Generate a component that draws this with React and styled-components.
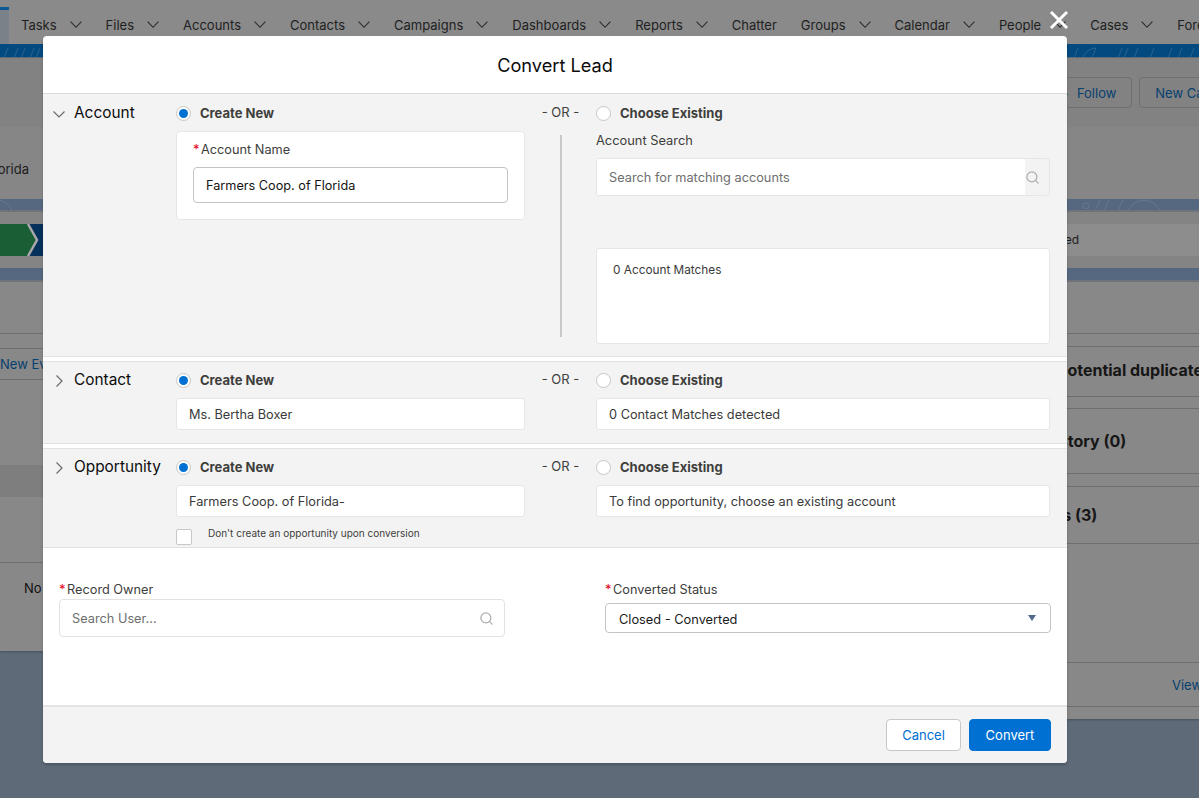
import React from "react";
import styled, { createGlobalStyle } from "styled-components";
import { Search } from "lucide-react";

const font = `Inter, "Liberation Sans", Arial, sans-serif`;

const Global = createGlobalStyle`
  html, body { margin: 0; padding: 0; background: #5e6a78; }
  * { box-sizing: border-box; }
  body { font-family: ${font}; font-size: 13px; }
`;

const Page = styled.div`
  position: relative;
  width: 1199px;
  height: 798px;
  overflow: hidden;
  background: #5e6a78;
  color: #1c1c1c;
`;

/* ---------- dimmed page behind the modal ---------- */
const Nav = styled.nav`
  display: flex;
  height: 44px;
  background: #8a8a8a;
`;
const AppTab = styled.div`
  width: 9px;
  height: 37px;
  margin-top: 7px;
  margin-right: 12px;
  background: #7b8189;
  border-top: 3px solid #0b5a94;
  flex: none;
`;
const NavList = styled.div`
  display: flex;
  align-items: center;
  gap: 24px;
  height: 50px;
  white-space: nowrap;
`;
const NavItem = styled.span`
  display: inline-flex;
  align-items: center;
  gap: 13px;
  font-size: 13px;
  color: #1f1f1f;
`;
const Band = styled.div`
  height: 14px;
  background: #034a80;
  border-bottom: 1px solid #5d6c7a;
  overflow: hidden;
  display: flex;
`;
const ActionStrip = styled.div`
  height: 69px;
  background: #828282;
  display: flex;
  align-items: center;
  justify-content: flex-end;
  gap: 7px;
  margin-right: -35px;
`;
const GhostButton = styled.span`
  height: 31px;
  padding: 0 15px;
  display: inline-flex;
  align-items: center;
  gap: 8px;
  border: 1px solid #6f6f6f;
  border-radius: 4px;
  color: #07406f;
  font-size: 13px;
  white-space: nowrap;
`;
const Identity = styled.div`
  height: 72px;
  background: #868686;
  display: flex;
  align-items: center;
  padding-top: 12px;
`;
const ClippedName = styled.div`
  width: 29px;
  display: flex;
  justify-content: flex-end;
  white-space: nowrap;
  font-size: 13px;
  color: #1c1c1c;
`;
const Banner = styled.div`
  height: ${(p) => p.$h}px;
  background: #56687f;
  border-bottom: 2px solid #6f747a;
  overflow: hidden;
  display: flex;
`;
const PathWrap = styled.div`
  height: 44px;
  background: #848484;
  padding-top: 12px;
`;
const PathBar = styled.div`
  display: flex;
  height: 32px;
  background: #8d8d8d;
  align-items: center;
  justify-content: flex-end;
  padding: 0 120px 2px 0;
  font-size: 12px;
  color: #1c1c1c;
`;
const PathArt = styled.svg`
  position: absolute;
  left: 0;
  top: 224px;
`;
const Spacer = styled.div`
  height: 12px;
  background: #848484;
`;
const Main = styled.div`
  display: grid;
  grid-template-columns: 700px 499px;
  align-items: start;
`;
const Panel = styled.div`
  height: ${(p) => p.$h}px;
  background: #888;
  box-shadow: 0 1px 2px rgba(0, 0, 0, 0.25);
`;
const Rule = styled.div`
  border-top: 1px solid #6e6e6e;
  height: ${(p) => p.$h}px;
  display: flex;
  align-items: ${(p) => (p.$top ? "flex-start" : "center")};
  padding-left: ${(p) => p.$inset || 0}px;
  padding-top: ${(p) => p.$top || 0}px;
  padding-bottom: ${(p) => p.$lift || 0}px;
  white-space: nowrap;
`;
const Gap = styled.div`
  height: ${(p) => p.$h}px;
  background: ${(p) => p.$bg || "transparent"};
`;
const EventLink = styled.span`
  color: #07406f;
  font-size: 13px;
`;
const Empty = styled.span`
  font-size: 13px;
  line-height: 16px;
  color: #111;
`;
const RelTitle = styled.span`
  font-size: 16px;
  font-weight: 700;
  color: #161616;
`;

/* ---------- modal ---------- */
const CloseBtn = styled.svg`
  position: absolute;
  left: 1049px;
  top: 10px;
`;
const Modal = styled.div`
  position: absolute;
  left: 43px;
  top: 36px;
  width: 1024px;
  height: 727px;
  background: #fff;
  border-radius: 4px;
  display: flex;
  flex-direction: column;
  box-shadow: 0 2px 3px rgba(0, 0, 0, 0.2);
  overflow: hidden;
`;
const ModalHeader = styled.h2`
  margin: 0;
  height: 58px;
  flex: none;
  display: flex;
  align-items: center;
  justify-content: center;
  font-size: 18.2px;
  font-weight: 400;
  color: #0b0b0b;
  border-bottom: 1px solid #dddbda;
`;
const Section = styled.section`
  display: grid;
  grid-template-columns: 133px 349px 71px 454px;
  flex: none;
  height: ${(p) => p.$h}px;
  padding-top: ${(p) => (p.$first ? 11 : 10)}px;
  background: #f3f3f3;
  border-bottom: 1px solid #e2e2e2;
  border-top: ${(p) => (p.$first ? "none" : "1px solid #e2e2e2")};
  margin-top: ${(p) => (p.$first ? 0 : 4)}px;
`;
const TitleCol = styled.div`
  display: flex;
  align-items: flex-start;
  gap: 8px;
  padding-left: 9px;
  height: 16px;
`;
const SectionTitle = styled.span`
  font-size: 15.4px;
  line-height: 16px;
  color: #0c0c0c;
  white-space: nowrap;
`;
const Chevron = styled.svg`
  flex: none;
  margin-top: 2px;
`;
const Col = styled.div`
  display: flex;
  flex-direction: column;
  min-width: 0;
`;
const RadioRow = styled.label`
  display: flex;
  align-items: center;
  gap: 9px;
  height: 16px;
  font-size: 13px;
  font-weight: 700;
  color: #3e3e3c;
`;
const RadioText = styled.span`
  margin-top: -1px;
`;
const RadioDot = styled.span`
  width: 15px;
  height: 15px;
  border-radius: 50%;
  background: #fff;
  border: 1px solid #c9c7c5;
  display: flex;
  align-items: center;
  justify-content: center;
  flex: none;
  &::after {
    content: "";
    width: 9px;
    height: 9px;
    border-radius: 50%;
    background: ${(p) => (p.$on ? "#0070d2" : "transparent")};
  }
`;
const Card = styled.div`
  margin-top: 10px;
  background: #fff;
  border: 1px solid #e6e6e6;
  border-radius: 4px;
  padding: 9px 16px 16px;
  height: 89px;
`;
const FieldLabel = styled.div`
  display: flex;
  align-items: center;
  height: 16px;
  font-size: 12.75px;
  color: #3e3e3c;
  white-space: nowrap;
`;
const Star = styled.span`
  color: #e3001b;
  width: 8px;
  font-size: 13px;
  line-height: 13px;
`;
const TextInput = styled.input`
  display: block;
  width: 100%;
  height: 36px;
  margin-top: 10px;
  padding: 0 12px;
  border: 1px solid #c4c4c4;
  border-radius: 4px;
  background: #fff;
  font: 12.7px ${font};
  color: #141414;
  outline: none;
`;
const ReadBox = styled.div`
  margin-top: 10px;
  height: 32px;
  display: flex;
  align-items: center;
  padding: 0 12px;
  background: #fff;
  border: 1px solid #e6e6e6;
  border-radius: 3px;
  font-size: 12.75px;
  color: #3a3a3a;
  white-space: nowrap;
`;
const OrCol = styled.div`
  display: flex;
  flex-direction: column;
  align-items: center;
`;
const OrText = styled.span`
  font-size: 13px;
  line-height: 14px;
  color: #3e3e3c;
  white-space: nowrap;
`;
const VRule = styled.div`
  width: 2px;
  height: 202px;
  margin-top: 16px;
  background: #c9c9c9;
`;
const SearchLabel = styled.div`
  margin-top: 12px;
  height: 16px;
  line-height: 16px;
  font-size: 12.85px;
  color: #3e3e3c;
`;
const SearchBox = styled.div`
  margin-top: 9px;
  height: 38px;
  display: flex;
  align-items: stretch;
  border: 1px solid #e6e6e6;
  border-radius: 3px;
  background: #f3f3f3;
  overflow: hidden;
`;
const SearchInput = styled.input`
  flex: 1;
  min-width: 0;
  border: none;
  background: #fff;
  padding: 0 12px;
  font: 12.75px ${font};
  outline: none;
  &::placeholder {
    color: #6e6e6e;
    opacity: 1;
  }
`;
const SearchAddon = styled.span`
  width: 24px;
  display: flex;
  align-items: center;
  padding-left: 0;
  color: #adadad;
  flex: none;
`;
const MatchBox = styled.div`
  margin-top: 52px;
  height: 96px;
  padding: 14px 16px;
  background: #fff;
  border: 1px solid #e6e6e6;
  border-radius: 3px;
  font-size: 11.8px;
  line-height: 14px;
  color: #3a3a3a;
`;
const OptOut = styled.label`
  display: flex;
  align-items: flex-start;
  gap: 16px;
  margin-top: 12px;
  font-size: 10px;
  line-height: 10px;
  color: #3e3e3c;
`;
const Check = styled.span`
  width: 16px;
  height: 16px;
  background: #fff;
  border: 1px solid #c9c7c5;
  border-radius: 2px;
  flex: none;
`;
const OptText = styled.span`
  margin-top: -1px;
  white-space: nowrap;
`;
const Body = styled.div`
  flex: 1;
  display: grid;
  grid-template-columns: 446px 446px;
  column-gap: 100px;
  padding: 33px 0 0 16px;
  align-items: start;
  background: #fff;
`;
const OwnerBox = styled.div`
  margin-top: 2px;
  height: 38px;
  display: flex;
  align-items: center;
  border: 1px solid #e2e2e2;
  border-radius: 4px;
  padding-right: 10px;
  color: #adadad;
`;
const Select = styled.div`
  margin-top: 6px;
  height: 30px;
  display: flex;
  align-items: center;
  justify-content: space-between;
  padding: 2px 14px 0 13px;
  border: 1px solid #c4c4c4;
  border-radius: 4px;
  font-size: 12.8px;
  color: #1a1a1a;
  &::after {
    content: "";
    border-left: 4.5px solid transparent;
    border-right: 4.5px solid transparent;
    border-top: 6px solid #54698d;
    margin-top: -3px;
  }
`;
const Footer = styled.footer`
  flex: none;
  height: 58px;
  display: flex;
  justify-content: flex-end;
  align-items: center;
  gap: 8px;
  padding: 0 16px 0 0;
  background: #f3f3f3;
  border-top: 2px solid #e4e4e4;
`;
const Btn = styled.button`
  height: 32px;
  width: ${(p) => p.$w}px;
  border-radius: 4px;
  font: 13px ${font};
  border: 1px solid ${(p) => (p.$primary ? "#0070d2" : "#c9c7c5")};
  background: ${(p) => (p.$primary ? "#0070d2" : "#fff")};
  color: ${(p) => (p.$primary ? "#fff" : "#0070d2")};
  padding: 0;
`;

const Down = ({ size = 12, color = "#2a2a2a" }) => (
  <svg width={size} height={size * 0.6} viewBox="0 0 12 7" fill="none">
    <path d="M.6.6 6 6.2 11.4.6" stroke={color} strokeWidth="1.1" />
  </svg>
);

const BandArt = () => (
  <svg width="1199" height="14" viewBox="0 0 1199 14" fill="none" stroke="#3d6f95" strokeWidth="0.7">
    {[4, 14, 21, 30, 36, 1074, 1092, 1118, 1124, 1134, 1150, 1168, 1178, 1190].map((x) => (
      <path key={x} d={`M${x} 14 q2 -5 4 -10`} />
    ))}
    <path d="M1082 14 q6 -10 14 -10" />
  </svg>
);

const BannerArt = () => (
  <svg width="1199" height="12" viewBox="0 0 1199 12" fill="none" stroke="#6b7c91" strokeWidth="0.7">
    <path d="M0 1q8 2 12 11" />
    <circle cx="1086" cy="7" r="3" />
    <path d="M1095 12q3-6 5-11M1104 12q2-6 5-11M1118 12q2-6 5-11M1128 12q4-10 16-11q12 1 16 11" />
  </svg>
);

const nav = [
  ["Tasks", 1], ["Files", 1], ["Accounts", 1], ["Contacts", 1], ["Campaigns", 1], ["Dashboards", 1],
  ["Reports", 1], ["Chatter", 0], ["Groups", 1], ["Calendar", 1], ["People", 1], ["Cases", 1], ["Forecasts", 1],
];

const Right = () => (
  <Chevron width="14" height="14" viewBox="0 0 14 14" fill="none">
    <path d="M4.5 1.5 10 7l-5.5 5.5" stroke="#6b6b6b" strokeWidth="1.2" />
  </Chevron>
);

const Radio = ({ on, children }) => (
  <RadioRow>
    <RadioDot $on={on} />
    <RadioText>{children}</RadioText>
  </RadioRow>
);

export default function App() {
  return (
    <Page>
      <Global />
      <Nav>
        <AppTab />
        <NavList>
          {nav.map(([t, c]) => (
            <NavItem key={t}>
              {t}
              {c ? <Down /> : null}
            </NavItem>
          ))}
        </NavList>
      </Nav>
      <Band><BandArt /></Band>
      <ActionStrip>
        <GhostButton><span>+</span>Follow</GhostButton>
        <GhostButton>New Case</GhostButton>
      </ActionStrip>
      <Identity>
        <ClippedName>Farmers Coop. of Florida</ClippedName>
      </Identity>
      <Banner $h={13}><BannerArt /></Banner>
      <PathWrap>
        <PathBar>Converted</PathBar>
      </PathWrap>
      <PathArt width="43" height="32" viewBox="0 0 43 32">
        <rect width="43" height="32" fill="#06305c" />
        <path d="M0 0H27L36 16 27 32H0Z" fill="#1a5e35" />
        <path d="M28 0 37 16 28 32" fill="none" stroke="#a9a9a9" strokeWidth="2.5" />
      </PathArt>
      <Spacer />
      <Banner $h={14} />
      <Main>
        <Panel $h={369}>
          <Gap $h={51} />
          <Rule $h={15} />
          <Rule $h={31}><EventLink>New Event</EventLink></Rule>
          <Rule $h={86} />
          <Gap $h={32} $bg="#7e7e7e" />
          <Gap $h={65} />
          <Rule $h={89} $inset={24} $top={17}><Empty>No</Empty></Rule>
        </Panel>
        <Panel $h={437}>
          <Gap $h={51} />
          <Rule $h={13} />
          <Rule $h={50} $inset={255} $lift={4}><RelTitle>We found no potential duplicates of this Lead.</RelTitle></Rule>
          <Rule $h={12} />
          <Rule $h={65} $inset={259}><RelTitle>Campaign History (0)</RelTitle></Rule>
          <Rule $h={13} />
          <Rule $h={57} $inset={325}><RelTitle>Notes (3)</RelTitle></Rule>
          <Rule $h={119} />
          <Rule $h={44} $inset={472}><EventLink>View All</EventLink></Rule>
          <Rule $h={12} />
        </Panel>
      </Main>

      <CloseBtn width="20" height="20" viewBox="0 0 20 20" fill="none">
        <path d="M2 2 18 18M18 2 2 18" stroke="#fff" strokeWidth="3" />
      </CloseBtn>

      <Modal>
        <ModalHeader>Convert Lead</ModalHeader>

        <Section $first $h={263}>
          <TitleCol>
            <Chevron width="14" height="14" viewBox="0 0 14 14" fill="none">
              <path d="M1.5 4.5 7 10l5.5-5.5" stroke="#6b6b6b" strokeWidth="1.2" />
            </Chevron>
            <SectionTitle>Account</SectionTitle>
          </TitleCol>
          <Col>
            <Radio on>Create New</Radio>
            <Card>
              <FieldLabel><Star>*</Star>Account Name</FieldLabel>
              <TextInput readOnly value="Farmers Coop. of Florida" />
            </Card>
          </Col>
          <OrCol>
            <OrText>- OR -</OrText>
            <VRule />
          </OrCol>
          <Col>
            <Radio>Choose Existing</Radio>
            <SearchLabel>Account Search</SearchLabel>
            <SearchBox>
              <SearchInput placeholder="Search for matching accounts" />
              <SearchAddon><Search size={15} /></SearchAddon>
            </SearchBox>
            <MatchBox>0 Account Matches</MatchBox>
          </Col>
        </Section>

        <Section $h={83}>
          <TitleCol>
            <Right />
            <SectionTitle>Contact</SectionTitle>
          </TitleCol>
          <Col>
            <Radio on>Create New</Radio>
            <ReadBox>Ms. Bertha Boxer</ReadBox>
          </Col>
          <OrCol><OrText>- OR -</OrText></OrCol>
          <Col>
            <Radio>Choose Existing</Radio>
            <ReadBox>0 Contact Matches detected</ReadBox>
          </Col>
        </Section>

        <Section $h={100}>
          <TitleCol>
            <Right />
            <SectionTitle>Opportunity</SectionTitle>
          </TitleCol>
          <Col>
            <Radio on>Create New</Radio>
            <ReadBox>Farmers Coop. of Florida-</ReadBox>
            <OptOut>
              <Check />
              <OptText>Don't create an opportunity upon conversion</OptText>
            </OptOut>
          </Col>
          <OrCol><OrText>- OR -</OrText></OrCol>
          <Col>
            <Radio>Choose Existing</Radio>
            <ReadBox>To find opportunity, choose an existing account</ReadBox>
          </Col>
        </Section>

        <Body>
          <div>
            <FieldLabel><Star>*</Star>Record Owner</FieldLabel>
            <OwnerBox>
              <SearchInput placeholder="Search User..." />
              <Search size={15} />
            </OwnerBox>
          </div>
          <div>
            <FieldLabel><Star>*</Star>Converted Status</FieldLabel>
            <Select>Closed - Converted</Select>
          </div>
        </Body>

        <Footer>
          <Btn $w={75}>Cancel</Btn>
          <Btn $w={82} $primary>Convert</Btn>
        </Footer>
      </Modal>
    </Page>
  );
}
